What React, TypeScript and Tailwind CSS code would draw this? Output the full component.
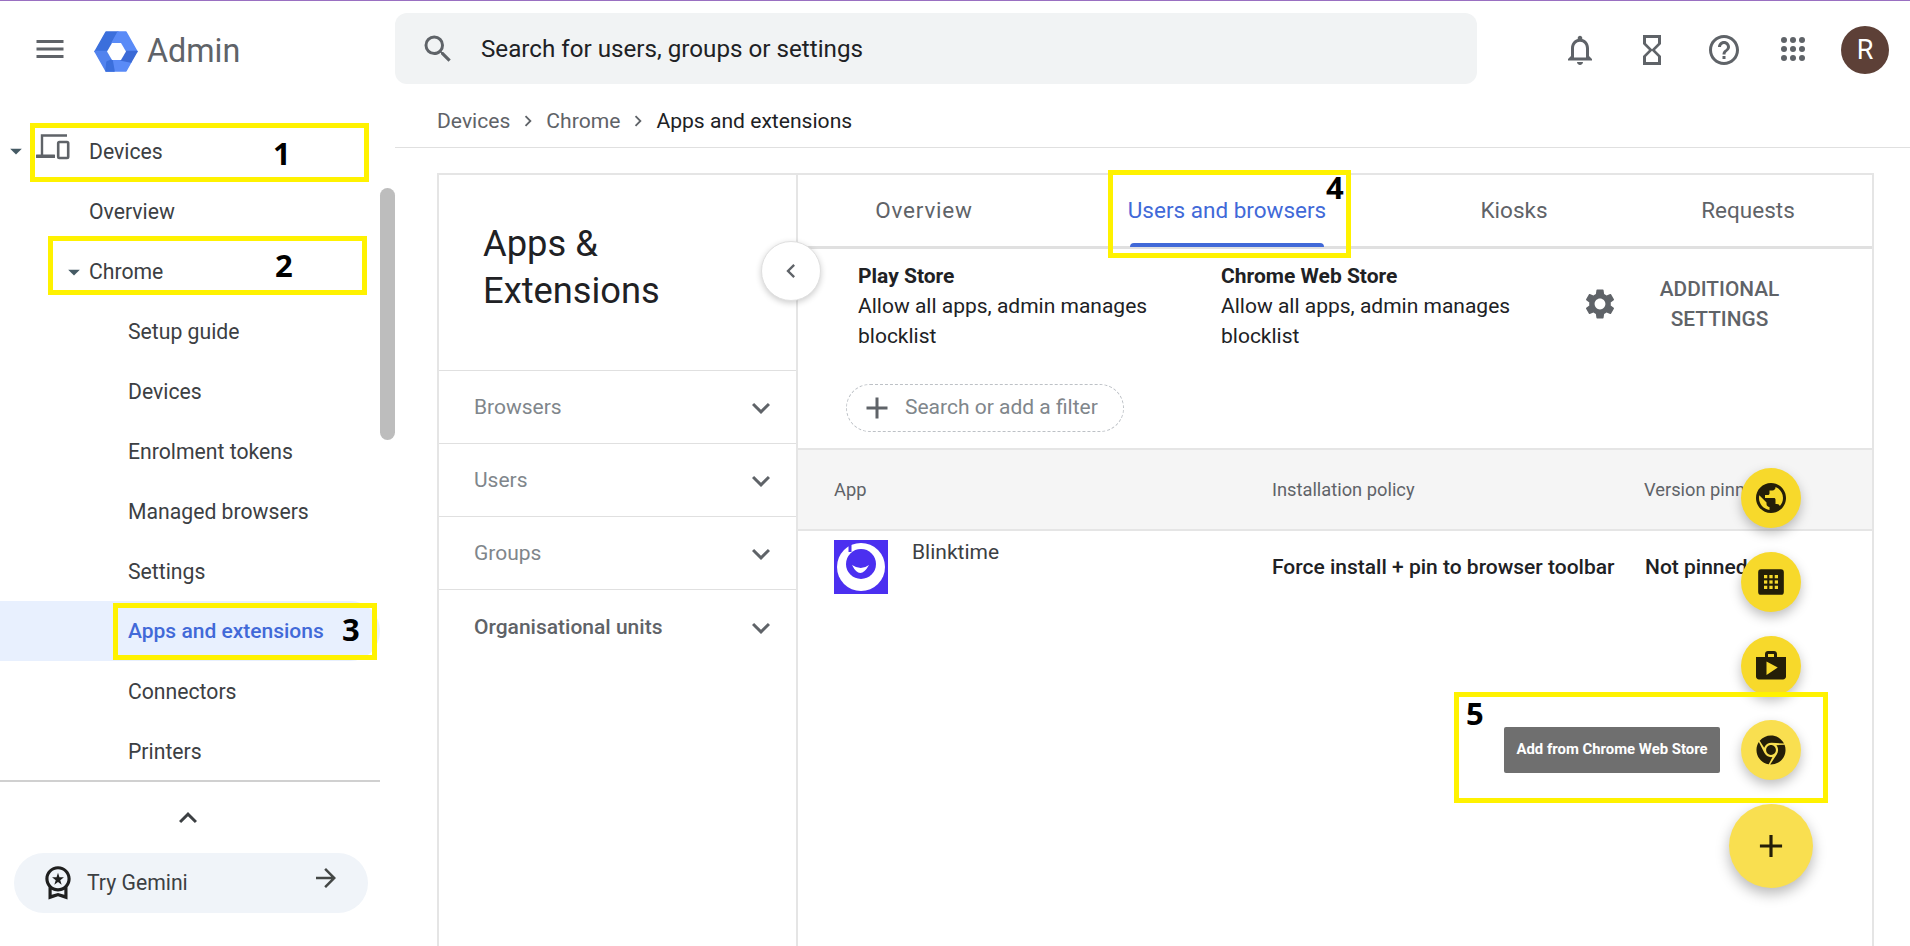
import React from "react";
import {
  MdNotificationsNone, MdHourglassEmpty, MdHelpOutline, MdSearch, MdMenu, MdArrowDropDown,
  MdExpandMore, MdExpandLess, MdChevronLeft, MdSettings, MdAdd, MdPublic, MdShop,
  MdOutlineWorkspacePremium, MdArrowForward,
} from "react-icons/md";
import { FaChrome } from "react-icons/fa";

function Logo() {
  return (
    <svg width="44" height="41" viewBox="0 0 44 41">
      <g strokeLinejoin="round" strokeWidth="1.5">
        <path d="M1 20.5 L12 1 L24 1 L18 12 L13 20.5 Z" fill="#3b6fdc" stroke="#3b6fdc" />
        <path d="M24 1 L32 1 L43 20.5 L32 20.5 L27 12 L18 12 Z" fill="#5a8bf7" stroke="#5a8bf7" />
        <path d="M1 20.5 L13 20.5 L18 29 L20 40 L12 40 Z" fill="#5283ee" stroke="#5283ee" />
        <path d="M20 40 L32 40 L37 31 L27 29 L18 29 Z" fill="#5a8bf7" stroke="#5a8bf7" />
        <path d="M43 20.5 L37 31 L27 29 L32 20.5 Z" fill="#3b6ad6" stroke="#3b6ad6" />
        <path d="M12 40 L20 40 L18 29 L13 31 Z" fill="#3b6fdc" stroke="#3b6fdc" />
      </g>
      <path d="M13 20.5 L18 12 L27 12 L32 20.5 L27 29 L18 29 Z" fill="#fff" />
    </svg>
  );
}

function Blink() {
  return (
    <svg width="54" height="54" viewBox="0 0 54 54" className="block">
      <rect width="54" height="54" fill="#4b2ff0" />
      <circle cx="27" cy="27" r="24" fill="#fff" />
      <circle cx="27" cy="24" r="15" fill="#4b2ff0" />
      <path d="M16 3 L16 12" stroke="#4b2ff0" strokeWidth="3" />
      <path d="M18 25 Q26 41 35 25 Q27 31 18 25 Z" fill="#fff" />
    </svg>
  );
}

function Grid() {
  const dots = [];
  for (let y = 0; y < 3; y++) for (let x = 0; x < 3; x++) dots.push(<rect key={`${x}${y}`} x={6 + x * 4.6} y={6 + y * 4.6} width="2.8" height="2.8" fill="#f7d92b" />);
  return (
    <svg width="28" height="28" viewBox="0 0 24 24">
      <rect x="1" y="1" width="22" height="22" rx="2.5" fill="#241e08" />
      {dots}
    </svg>
  );
}

function AppsDots() {
  const dots = [];
  for (let y = 0; y < 3; y++) for (let x = 0; x < 3; x++) dots.push(<circle key={`${x}${y}`} cx={3 + x * 9} cy={3 + y * 9} r="3" fill="#5f6368" />);
  return <svg width="24" height="24" viewBox="0 0 24 24">{dots}</svg>;
}

function DevicesIcon() {
  return (
    <svg width="34" height="26" viewBox="0 0 34 26" fill="none" stroke="#5f6368">
      <path d="M31 1.5 L6 1.5 L6 21" strokeWidth="2.4" />
      <rect x="0" y="20.5" width="19" height="3.6" fill="#5f6368" stroke="none" rx="0.5" />
      <rect x="22.2" y="8" width="10" height="16" rx="1.2" strokeWidth="2.6" />
    </svg>
  );
}

function Row({ label, active, indent }: { label: string; active?: boolean; indent: "a" | "b" }) {
  return (
    <div className={`h-[60px] flex items-center pt-[2px] ${active ? "bg-[#e8f0fe] rounded-r-[30px] text-[#4169d8] font-medium text-[21px]" : "text-[#3c4043] text-[21.2px]"} ${indent === "a" ? "pl-[89px]" : "pl-[128px]"}`}>
      {label}
    </div>
  );
}

function Filter({ label, dark }: { label: string; dark?: boolean }) {
  return (
    <div className={`h-[73px] flex items-center justify-between pt-[2px] pl-[35px] pr-[17px] border-b border-[#e0e0e0] text-[21px] last:border-b-0 ${dark ? "text-[#5f6368] font-medium" : "text-[#80868b]"}`}>
      <span>{label}</span>
      <MdExpandMore className="text-[#5f6368]" size={36} />
    </div>
  );
}

function Fab({ top, children, light }: { top: number; children: React.ReactNode; light?: boolean }) {
  return (
    <div
      className={`absolute left-[1741px] w-[60px] h-[60px] rounded-full flex items-center justify-center shadow-[0_5px_12px_rgba(0,0,0,0.25)] ${light ? "bg-[#f9df50]" : "bg-[#f7d92b]"}`}
      style={{ top }}
    >
      {children}
    </div>
  );
}

function Box({ x, y, w, h }: { x: number; y: number; w: number; h: number }) {
  return <div className="absolute border-[5px] border-[#fff200] pointer-events-none" style={{ left: x, top: y, width: w, height: h }} />;
}

function Num({ x, y, n }: { x: number; y: number; n: string }) {
  return (
    <div className="absolute font-['Open_Sans',sans-serif] font-bold text-[31px] leading-none text-black" style={{ left: x, top: y }}>
      {n}
    </div>
  );
}

export default function App() {
  return (
    <div className="relative w-[1910px] h-[946px] overflow-hidden bg-white font-['Roboto',sans-serif] flex flex-col">
      <div className="h-px bg-[#9a70c2] shrink-0" />
      <header className="h-[99px] shrink-0 flex">
        <div className="w-[395px] flex items-start pl-[32px] pt-[30px]">
          <MdMenu size={36} className="text-[#5f6368]" />
          <div className="ml-[26px] flex items-center">
            <Logo />
            <span className="ml-[9px] text-[32.3px] leading-[41px] text-[#5f6368]">Admin</span>
          </div>
        </div>
        <div className="w-[1082px] mt-[12px] h-[71px] rounded-[12px] bg-[#f1f3f4] flex items-center pl-[25px]">
          <MdSearch size={36} className="text-[#5f6368]" />
          <span className="ml-[25px] pt-[1px] text-[24.2px] text-[#202124]">Search for users, groups or settings</span>
        </div>
        <div className="flex-1 relative">
          <MdNotificationsNone size={36} className="absolute left-[85px] top-[31px] text-[#5f6368]" />
          <MdHourglassEmpty size={36} className="absolute left-[157px] top-[31px] text-[#5f6368]" />
          <MdHelpOutline size={36} className="absolute left-[229px] top-[31px] text-[#5f6368]" />
          <div className="absolute left-[304px] top-[36px]"><AppsDots /></div>
          <div className="absolute left-[364px] top-[25px] w-[48px] h-[48px] rounded-full bg-[#5d4037] text-white flex items-center justify-center text-[27px]">R</div>
        </div>
      </header>

      <div className="flex-1 flex min-h-0">
        <aside className="w-[395px] shrink-0 flex flex-col">
          <div className="h-[680px] shrink-0 flex">
            <nav className="w-[380px] pt-[21px] relative">
              <Row label="Devices" indent="a" />
              <Row label="Overview" indent="a" />
              <Row label="Chrome" indent="a" />
              <Row label="Setup guide" indent="b" />
              <Row label="Devices" indent="b" />
              <Row label="Enrolment tokens" indent="b" />
              <Row label="Managed browsers" indent="b" />
              <Row label="Settings" indent="b" />
              <Row label="Apps and extensions" indent="b" active />
              <Row label="Connectors" indent="b" />
              <Row label="Printers" indent="b" />
              <MdArrowDropDown size={28} className="absolute left-[2px] top-[37px] text-[#455a64]" />
              <div className="absolute left-[36px] top-[34px]"><DevicesIcon /></div>
              <MdArrowDropDown size={28} className="absolute left-[60px] top-[158px] text-[#455a64]" />
            </nav>
            <div className="w-[15px] pt-[88px]">
              <div className="h-[252px] rounded-full bg-[#bdbdbd]" />
            </div>
          </div>
          <div className="w-[380px] border-t-2 border-[#d0d0d0] flex-1 flex flex-col items-start">
            <MdExpandLess size={36} className="mt-[18px] ml-[170px] text-[#3c4043]" />
            <div className="mt-[17px] ml-[14px] w-[354px] h-[60px] rounded-[30px] bg-[#f0f4f9] flex items-center pl-[25px] pr-[27px]">
              <MdOutlineWorkspacePremium size={38} className="text-[#1f1f1f] -mt-[3px]" />
              <span className="ml-[10px] text-[21.2px] text-[#3c4043] flex-1">Try Gemini</span>
              <MdArrowForward size={30} className="text-[#444746] -mt-[10px]" />
            </div>
          </div>
        </aside>

        <main className="flex-1 flex flex-col min-w-0">
          <div className="h-[48px] shrink-0 border-b border-[#e0e0e0] pl-[42px] pb-[6px] flex items-center text-[21.1px] text-[#5f6368] -mb-px">
            <span>Devices</span>
            <MdChevronLeft size={22} className="rotate-180 mx-[7px]" />
            <span>Chrome</span>
            <MdChevronLeft size={22} className="rotate-180 mx-[7px]" />
            <span className="text-[#202124]">Apps and extensions</span>
          </div>
          <div className="flex-1 pl-[42px] pr-[36px] pt-[26px] min-h-0">
            <div className="h-[800px] border-2 border-[#e5e5e5] flex">
              <div className="w-[359px] shrink-0 border-r-2 border-[#e5e5e5]">
                <div className="h-[196px] border-b border-[#e0e0e0] pl-[44px] pt-[45px] text-[36.3px] leading-[47px] text-[#202124]">
                  Apps &amp;<br />Extensions
                </div>
                <Filter label="Browsers" />
                <Filter label="Users" />
                <Filter label="Groups" />
                <Filter label="Organisational units" dark />
              </div>
              <div className="flex-1 flex flex-col min-w-0">
                <div className="h-[74px] shrink-0 border-b-[3px] border-[#e0e0e0] flex text-[22.5px]">
                  <div className="w-[252px] shrink-0 flex items-center justify-center text-[#5f6368] tracking-[0.8px]">Overview</div>
                  <div className="relative w-[354px] shrink-0 flex items-center justify-center text-[#4169d8]">
                    Users and browsers
                    <div className="absolute left-[80px] w-[194px] -bottom-[1px] h-[4px] rounded-t bg-[#4169d8]" />
                  </div>
                  <div className="w-[220px] shrink-0 flex items-center justify-center text-[#5f6368]">Kiosks</div>
                  <div className="w-[248px] shrink-0 flex items-center justify-center text-[#5f6368]">Requests</div>
                </div>
                <div className="h-[128px] shrink-0 flex pt-[12px] pl-[60px] text-[21px] leading-[30px] text-[#202124]">
                  <div className="w-[363px]">
                    <div className="font-bold">Play Store</div>
                    <div>Allow all apps, admin manages<br />blocklist</div>
                  </div>
                  <div className="w-[363px]">
                    <div className="font-bold">Chrome Web Store</div>
                    <div>Allow all apps, admin manages<br />blocklist</div>
                  </div>
                  <div className="-ml-[2px] w-[260px] flex">
                    <MdSettings size={36} className="text-[#5f6368] mt-[25px]" />
                    <div className="w-[203px] mt-[14px] text-center font-medium text-[#5f6368] text-[20.8px] leading-[29.5px]">ADDITIONAL<br />SETTINGS</div>
                  </div>
                </div>
                <div className="h-[71px] shrink-0 pl-[48px] pt-[7px]">
                  <div className="w-[278px] h-[48px] rounded-[24px] border border-dashed border-[#bdc1c6] flex items-center pl-[12px]">
                    <MdAdd size={36} className="text-[#5f6368]" />
                    <span className="ml-[10px] text-[21px] text-[#80868b]">Search or add a filter</span>
                  </div>
                </div>
                <div className="h-[83px] shrink-0 bg-[#f5f5f5] border-y-2 border-[#e5e5e5] flex items-center text-[18.3px] text-[#5f6368]">
                  <div className="w-[473px] pl-[36px]">App</div>
                  <div className="w-[372px] pl-[1px]">Installation policy</div>
                  <div className="whitespace-nowrap pl-[1px]">Version pinning</div>
                </div>
                <div className="flex">
                  <div className="w-[473px] pl-[36px] pt-[9px] flex">
                    <Blink />
                    <span className="ml-[24px] text-[21px] leading-[24px] text-[#3c4043]">Blinktime</span>
                  </div>
                  <div className="w-[373px] pl-[1px] pt-[24px] text-[21px] leading-[24px] font-medium text-[#202124] whitespace-nowrap">Force install + pin to browser toolbar</div>
                  <div className="pl-[1px] pt-[24px] text-[21px] leading-[24px] font-medium text-[#202124] whitespace-nowrap">Not pinned</div>
                </div>
              </div>
            </div>
          </div>
        </main>
      </div>

      <div className="absolute left-[761px] top-[241px] w-[60px] h-[60px] rounded-full bg-white border border-[#e0e0e0] shadow-[0_2px_6px_rgba(0,0,0,0.2)] flex items-center justify-center">
        <MdChevronLeft size={28} className="text-[#5f6368]" />
      </div>

      <Fab top={468}><MdPublic size={36} className="text-[#241e08]" /></Fab>
      <Fab top={552}><Grid /></Fab>
      <Fab top={636}><MdShop size={36} className="text-[#241e08]" /></Fab>
      <Fab top={720} light><FaChrome size={30} className="text-[#241e08]" /></Fab>
      <div className="absolute left-[1504px] top-[727px] w-[216px] h-[46px] rounded-[2px] bg-[#6f6f6f] text-white font-bold text-[14.9px] pb-[2px] flex items-center justify-center">Add from Chrome Web Store</div>
      <div className="absolute left-[1729px] top-[804px] w-[84px] h-[84px] rounded-full bg-[#f9df50] flex items-center justify-center shadow-[0_6px_14px_rgba(0,0,0,0.28)]">
        <MdAdd size={38} className="text-[#241e08]" />
      </div>

      <Box x={30} y={123} w={339} h={59} />
      <Box x={48} y={236} w={319} h={59} />
      <Box x={113} y={603} w={264} h={57} />
      <Box x={1108} y={170} w={243} h={88} />
      <Box x={1454} y={692} w={374} h={111} />
      <Num x={273} y={138} n="1" />
      <Num x={275} y={250} n="2" />
      <Num x={342} y={614} n="3" />
      <Num x={1326} y={172} n="4" />
      <Num x={1466} y={698} n="5" />
    </div>
  );
}
